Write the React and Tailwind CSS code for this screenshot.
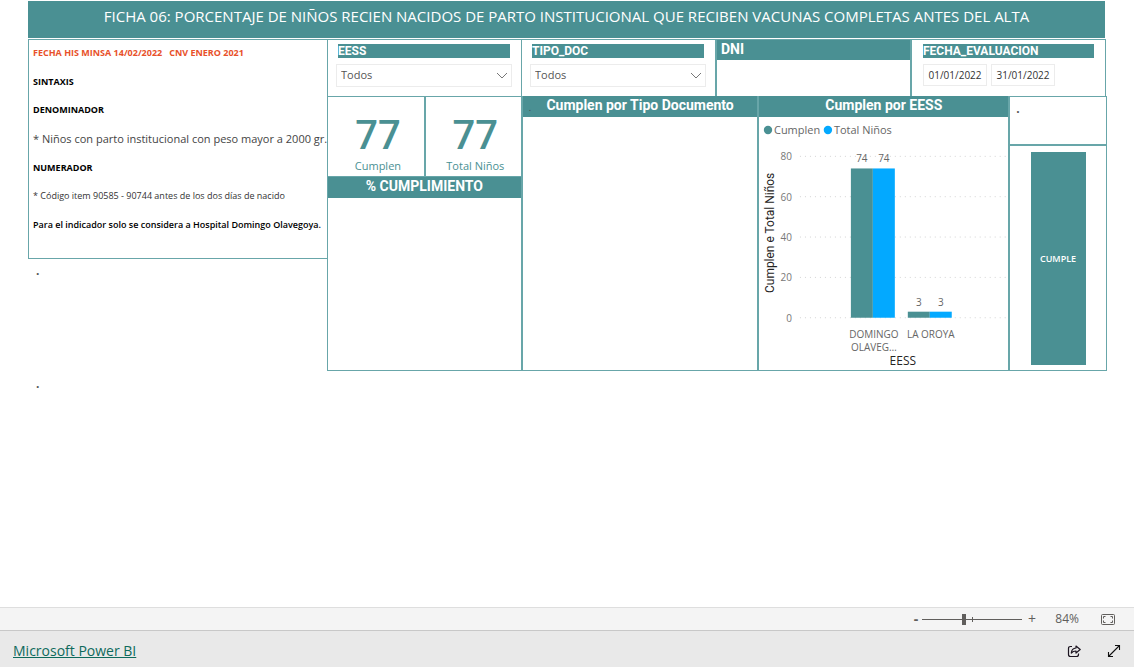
import React, { useState } from "react";

const SANS = "font-['Open_Sans','Noto_Sans',sans-serif]";
const DIN = "font-[Roboto,'Liberation_Sans',sans-serif]";

function PanelTitle({ children, className = "h-[21px] text-center" }) {
  return (
    <h2 className={`bg-[#4a9093] text-sm leading-[18px] font-bold text-white ${DIN} ${className}`}>
      {children}
    </h2>
  );
}

function SlicerLabel({ children, htmlFor }) {
  return (
    <label
      htmlFor={htmlFor}
      className={`mx-0.5 block h-3.5 overflow-hidden bg-[#4a9093] text-xs leading-[14px] font-bold text-white ${DIN}`}
    >
      {children}
    </label>
  );
}

function SelectSlicer({ id, label }) {
  return (
    <div className="border-t border-l border-[#68a6a9] pt-1 pr-[9px] pl-2">
      <SlicerLabel htmlFor={id}>{label}</SlicerLabel>
      <div className="relative mt-1.5">
        <select
          id={id}
          className="block h-[23px] w-full appearance-none border border-[#ececec] bg-white pl-1 text-[11px] text-[#555]"
        >
          <option>Todos</option>
        </select>
        <svg
          className="pointer-events-none absolute top-2 right-1 h-[7px] w-3"
          viewBox="0 0 12 7"
          fill="none"
          stroke="#777"
        >
          <path d="M1 1l5 5 5-5" />
        </svg>
      </div>
    </div>
  );
}

function KpiCard({ value, label, className }) {
  return (
    <div className={`flex flex-col items-center border-t border-[#68a6a9] pt-[17px] text-[#4a9093] ${className}`}>
      <p className={`text-[40px] leading-[44px] font-medium ${DIN}`}>{value}</p>
      <p className="text-[11px] leading-4">{label}</p>
    </div>
  );
}

const TICKS = [80, 60, 40, 20, 0];
const GROUPS = [
  { x: 92, values: [74, 74], lines: ["DOMINGO", "OLAVEG…"] },
  { x: 149, values: [3, 3], lines: ["LA OROYA"] },
];
const yOf = (v) => 201 - v * 2.02;

function BarChart() {
  return (
    <svg viewBox="0 0 249 253" className="block w-full" role="img" aria-label="Cumplen por EESS">
      <circle cx="9" cy="13" r="4.2" fill="#4a9093" />
      <text x="15" y="17" fontSize="11" fill="#666">Cumplen</text>
      <circle cx="69" cy="13" r="4.2" fill="#03a9ff" />
      <text x="75" y="17" fontSize="11" fill="#666">Total Niños</text>
      {TICKS.map((t) => (
        <g key={t}>
          <text x="33" y={yOf(t) + 4} fontSize="10" fill="#777" textAnchor="end">{t}</text>
          <line x1="41" x2="247" y1={yOf(t)} y2={yOf(t)} stroke="#d4d4d4" strokeDasharray="1 4" />
        </g>
      ))}
      {GROUPS.map((g) => (
        <g key={g.x}>
          {g.values.map((v, i) => (
            <g key={i}>
              <rect
                x={g.x + i * 22}
                y={yOf(v)}
                width="22"
                height={201 - yOf(v)}
                fill={i ? "#03a9ff" : "#4a9093"}
              />
              <text x={g.x + 11 + i * 22} y={yOf(v) - 6} fontSize="10" fill="#666" textAnchor="middle">
                {v}
              </text>
            </g>
          ))}
          {g.lines.map((l, i) => (
            <text key={l} x={g.x + 23} y={221 + i * 13} fontSize="10" fill="#666" textAnchor="middle">
              {l}
            </text>
          ))}
        </g>
      ))}
      <text x="144" y="248" fontSize="12" fill="#252423" textAnchor="middle">EESS</text>
      <text
        transform="translate(15 116) rotate(-90)"
        fontSize="12"
        fill="#252423"
        textAnchor="middle"
        className={DIN}
      >
        Cumplen e Total Niños
      </text>
    </svg>
  );
}

function InfoPanel() {
  return (
    <section className="flex h-[220px] flex-col justify-between border border-r-0 border-[#68a6a9] pt-[5px] pb-[26px] pl-1 text-[9px] leading-[15px] font-bold whitespace-nowrap text-black">
      <p className="whitespace-pre text-[#e8512a]">FECHA HIS MINSA 14/02/2022   CNV ENERO 2021</p>
      <p>SINTAXIS</p>
      <p>DENOMINADOR</p>
      <p className="text-[11px] font-normal text-[#444]">
        * Niños con parto institucional con peso mayor a 2000 gr.
      </p>
      <p>NUMERADOR</p>
      <p className="font-normal text-[#333]">* Código item 90585 - 90744 antes de los dos días de nacido</p>
      <p className="font-semibold">Para el indicador solo se considera a Hospital Domingo Olavegoya.</p>
    </section>
  );
}

function ZoomBar() {
  const [zoom, setZoom] = useState(84);
  return (
    <div className="flex h-[23px] items-center justify-end border-t border-[#dedede] bg-[#f4f4f4] pr-[19px] text-[#605e5c]">
      <button aria-label="Alejar" className="w-3 text-sm leading-5 font-bold" onClick={() => setZoom(zoom - 1)}>
        -
      </button>
      <div className="relative flex h-4 w-[100px] items-center">
        <span className="absolute left-1/2 h-[5px] w-px bg-[#605e5c]" />
        <input
          type="range"
          aria-label="Zoom"
          min="0"
          max="200"
          value={zoom}
          onChange={(e) => setZoom(Number(e.target.value))}
          className="relative h-px w-full appearance-none bg-[#605e5c] [&::-webkit-slider-thumb]:h-[11px] [&::-webkit-slider-thumb]:w-1 [&::-webkit-slider-thumb]:appearance-none [&::-webkit-slider-thumb]:bg-[#605e5c]"
        />
      </div>
      <button aria-label="Acercar" className="w-5 text-sm leading-5" onClick={() => setZoom(zoom + 1)}>
        +
      </button>
      <span className="w-[37px] text-right text-xs">{zoom}%</span>
      <button aria-label="Ajustar a la página" className="ml-[22px]">
        <svg width="14" height="11" viewBox="0 0 14 11" fill="none" stroke="#605e5c">
          <rect x=".5" y=".5" width="13" height="10" rx="1" />
          <path d="M2.500 4.500V2.500H4.500M9.500 2.500h2v2M2.500 6.500v2H4.500M9.500 8.500h2v-2" />
        </svg>
      </button>
    </div>
  );
}

export default function App() {
  return (
    <div className={`flex min-h-screen flex-col bg-white ${SANS}`}>
      <main className="flex-1 pt-px pr-[27px] pb-4 pl-7">
        <h1 className="mr-0.5 mb-px flex h-[37px] items-start justify-center bg-[#4a9093] pt-[3px] text-[15px] leading-6 whitespace-nowrap text-white">
          FICHA 06: PORCENTAJE DE NIÑOS RECIEN NACIDOS DE PARTO INSTITUCIONAL QUE RECIBEN VACUNAS COMPLETAS ANTES DEL ALTA
        </h1>
        <div className="grid grid-cols-[minmax(0,299fr)_minmax(0,780fr)]">
          <div className="text-xs leading-3 font-bold text-[#555]">
            <InfoPanel />
            <p className="mt-1.5 pl-2">.</p>
            <p className="mt-[101px] pl-2">.</p>
          </div>
          <div>
            <div className="mr-px grid h-[57px] grid-cols-[minmax(0,194fr)_minmax(0,194fr)_minmax(0,195fr)_minmax(0,195fr)] border-r border-[#68a6a9]">
              <SelectSlicer id="eess" label="EESS" />
              <SelectSlicer id="tipo-doc" label="TIPO_DOC" />
              <div className="border-t border-l-2 border-[#68a6a9]">
                <PanelTitle className="h-5 pl-1 text-left">DNI</PanelTitle>
              </div>
              <div className="border-t border-l-2 border-[#68a6a9] pt-1 pr-[9px] pl-[9px]">
                <SlicerLabel htmlFor="desde">FECHA_EVALUACION</SlicerLabel>
                <div className="mt-1.5 ml-0.5 flex gap-1">
                  <input
                    id="desde"
                    defaultValue="01/01/2022"
                    className="h-[22px] w-16 border border-[#ececec] text-center text-[10px] text-[#333]"
                  />
                  <input
                    aria-label="Hasta"
                    defaultValue="31/01/2022"
                    className="h-[22px] w-16 border border-[#ececec] text-center text-[10px] text-[#333]"
                  />
                </div>
              </div>
            </div>
            <div className="grid h-[275px] grid-cols-[minmax(0,194fr)_minmax(0,237fr)_minmax(0,251fr)_minmax(0,98fr)] border-r border-b border-[#68a6a9]">
              <div className="flex flex-col">
                <div className="grid h-20 grid-cols-2">
                  <KpiCard value="77" label="Cumplen" className="border-l pl-1" />
                  <KpiCard value="77" label="Total Niños" className="border-l-2 pl-1" />
                </div>
                <section className="flex-1 border-t border-l border-[#68a6a9]">
                  <PanelTitle>% CUMPLIMIENTO</PanelTitle>
                </section>
              </div>
              <section className="relative border-l-2 border-[#68a6a9]">
                <PanelTitle>Cumplen por Tipo Documento</PanelTitle>
                <span className="absolute top-1.5 left-1.5 text-[9px] leading-3 text-[#444]">.</span>
              </section>
              <section className="border-l-2 border-[#68a6a9]">
                <PanelTitle>Cumplen por EESS</PanelTitle>
                <BarChart />
              </section>
              <div className="flex flex-col border-t border-l-2 border-[#68a6a9]">
                <p className="h-[47px] pt-1.5 pl-1.5 text-xs leading-3 font-bold text-[#555]">.</p>
                <div className="flex flex-1 justify-center border-t-2 border-[#68a6a9] pt-1.5 pb-[5px]">
                  <div className="flex w-[55px] items-center justify-center bg-[#4a9093] text-[9px] font-semibold text-white">
                    CUMPLE
                  </div>
                </div>
              </div>
            </div>
          </div>
        </div>
      </main>
      <ZoomBar />
      <footer className="flex h-[37px] items-center justify-between border-t border-[#c8c8c8] bg-[#e9e9e9] pt-1 pr-[13px] pl-[13px]">
        <a href="#powerbi" className="text-sm text-[#0e6a5c] underline">
          Microsoft Power BI
        </a>
        <div className="flex items-center gap-[26px]">
          <button aria-label="Compartir">
            <svg width="14" height="13" viewBox="0 0 14 13" fill="none" stroke="#1c1420" strokeWidth="1.2" strokeLinejoin="round">
              <path d="M5 1.500H3.500Q1.500 1.500 1.500 3.500V9.500Q1.500 11.500 3.500 11.500H9.500Q11.500 11.500 11.500 9.500V8.500" />
              <path d="M9 1L13.200 4.500 9 8V6Q6 6 4.300 8 4.700 3.300 9 3z" />
            </svg>
          </button>
          <button aria-label="Pantalla completa">
            <svg width="14" height="14" viewBox="0 0 14 14" fill="none" stroke="#111" strokeWidth="1.1">
              <path d="M1.500 12.500l11-11M8 1.500h4.500V6M1.500 8v4.500H6" />
            </svg>
          </button>
        </div>
      </footer>
    </div>
  );
}
